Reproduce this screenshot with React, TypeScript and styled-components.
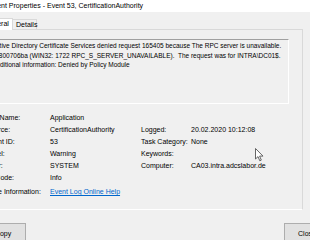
import styled, { createGlobalStyle } from 'styled-components';

const GlobalStyle = createGlobalStyle`
  html, body {
    margin: 0;
    padding: 0;
    background: #ffffff;
    overflow: hidden;
  }
  body {
    font-family: 'Liberation Sans', Arial, sans-serif;
    font-size: 7px;
    color: #000;
  }
`;

type Row = { label: string; value: string; label2?: string; value2?: string };

const rows: Row[] = [
  { label: 'Log Name:', value: 'Application' },
  { label: 'Source:', value: 'CertificationAuthority', label2: 'Logged:', value2: '20.02.2020 10:12:08' },
  { label: 'Event ID:', value: '53', label2: 'Task Category:', value2: 'None' },
  { label: 'Level:', value: 'Warning', label2: 'Keywords:', value2: '' },
  { label: 'User:', value: 'SYSTEM', label2: 'Computer:', value2: 'CA03.intra.adcslabor.de' },
  { label: 'OpCode:', value: 'Info' },
];

const App = () => {
  return (
    <>
      <GlobalStyle />
      <Window>
        <TitleBar>Event Properties - Event 53, CertificationAuthority</TitleBar>
        <Body>
          <TabStrip>
            <Tab active>General</Tab>
            <Tab>Details</Tab>
          </TabStrip>
          <TabPage>
            <MessageBox>
              Active Directory Certificate Services denied request 165405 because The RPC server is unavailable.
              <br />
              0x800706ba (WIN32: 1722 RPC_S_SERVER_UNAVAILABLE).&nbsp; The request was for INTRA\DC01$.
              <br />
              Additional information: Denied by Policy Module
            </MessageBox>
            <Fields>
              {rows.map((r) => (
                <FieldRow key={r.label}>
                  <Label>{r.label}</Label>
                  <Value>{r.value}</Value>
                  <Label>{r.label2 ?? ''}</Label>
                  <Value>{r.value2 ?? ''}</Value>
                </FieldRow>
              ))}
              <FieldRow more>
                <Label>More Information:</Label>
                <HelpLink href="#">Event Log Online Help</HelpLink>
              </FieldRow>
            </Fields>
          </TabPage>
          <ButtonRow>
            <Button>Copy</Button>
            <Button>Close</Button>
          </ButtonRow>
        </Body>
        <Cursor width="9" height="14" viewBox="0 0 9 14">
          <path d="M0.5 0.5 L0.5 11 L3 8.6 L4.8 12.8 L6.3 12.1 L4.6 8.1 L8 8.1 Z" fill="#fff" stroke="#555" strokeWidth="0.9" />
        </Cursor>
      </Window>
    </>
  );
};

const Window = styled.div`
  position: relative;
  width: 362px;
  height: 240px;
  margin-left: -26px;
  background: #f0f0f0;
`;

const TitleBar = styled.div`
  height: 12px;
  line-height: 11px;
  padding-left: 15px;
  background: #ffffff;
  white-space: nowrap;
`;

const Body = styled.div`
  padding: 7px 0 0 6px;
`;

const TabStrip = styled.div`
  display: flex;
  align-items: flex-end;
  height: 10px;
  position: relative;
  z-index: 1;
`;

const Tab = styled.div<{ active?: boolean }>`
  box-sizing: border-box;
  padding: 0 2px 0 3px;
  line-height: 10px;
  border: 1px solid #d9d9d9;
  border-bottom: none;
  white-space: nowrap;
  width: ${(p) => (p.active ? '33px' : '25px')};
  background: ${(p) => (p.active ? '#ffffff' : '#f0f0f0')};
  margin-left: ${(p) => (p.active ? '0' : '-1px')};
  height: ${(p) => (p.active ? '12px' : '10px')};
  margin-bottom: ${(p) => (p.active ? '-1px' : '0')};
`;

const TabPage = styled.div`
  width: 323px;
  height: 181px;
  box-sizing: border-box;
  border: 1px solid #d9d9d9;
  border-bottom-color: #ffffff;
  padding: 9px 13px 0 7px;
`;

const MessageBox = styled.div`
  height: 65px;
  box-sizing: border-box;
  border-top: 1px solid #a0a0a0;
  border-left: 1px solid #a0a0a0;
  border-bottom: 1px solid #ffffff;
  border-right: 1px solid #ffffff;
  padding: 1px 3px 0;
  font-size: 6.5px;
  line-height: 9.5px;
  white-space: nowrap;
  overflow: hidden;
`;

const Fields = styled.div`
  display: flex;
  flex-direction: column;
  padding: 7.5px 0 0 0;
  margin-left: -2px;
`;

const FieldRow = styled.div<{ more?: boolean }>`
  display: grid;
  grid-template-columns: 64px 91px 50px 1fr;
  height: 12.2px;
  line-height: 12px;
  margin-top: ${(p) => (p.more ? '1.5px' : '0')};
  white-space: nowrap;
`;

const Label = styled.span``;

const Value = styled.span``;

const HelpLink = styled.a`
  color: #0066cc;
  text-decoration: underline;
`;

const ButtonRow = styled.div`
  display: flex;
  justify-content: space-between;
  width: 350px;
  padding-top: 13px;
`;

const Button = styled.div`
  width: 46px;
  height: 22px;
  box-sizing: border-box;
  border: 1px solid #adadad;
  background: #e1e1e1;
  text-align: center;
  line-height: 19px;
`;

const Cursor = styled.svg`
  position: absolute;
  left: 281px;
  top: 148px;
`;

export default App;
